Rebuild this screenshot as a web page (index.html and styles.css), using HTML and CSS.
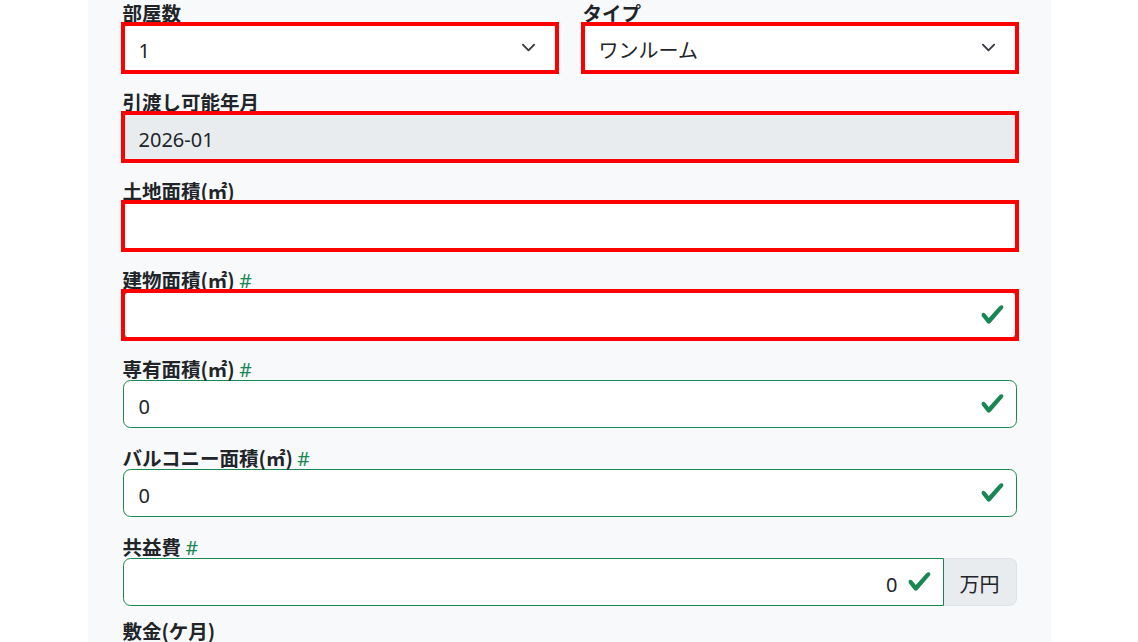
FILE: index.html
```html
<!DOCTYPE html>
<html lang="ja">
<head>
<meta charset="utf-8">
<title>物件情報</title>
<link rel="stylesheet" href="styles.css">
</head>
<body>
<div class="panel">
  <div class="row2">
    <div class="field">
      <label class="label">部屋数</label>
      <div class="flag">
        <div class="control">
          <select class="select"><option>1</option></select>
          <svg class="chev" viewBox="0 0 16 16" width="15" height="15"><path d="m2 5 6 6 6-6" fill="none" stroke="#343a40" stroke-width="2" stroke-linecap="round" stroke-linejoin="round"/></svg>
        </div>
      </div>
    </div>
    <div class="field">
      <label class="label">タイプ</label>
      <div class="flag">
        <div class="control">
          <select class="select"><option>ワンルーム</option></select>
          <svg class="chev" viewBox="0 0 16 16" width="15" height="15"><path d="m2 5 6 6 6-6" fill="none" stroke="#343a40" stroke-width="2" stroke-linecap="round" stroke-linejoin="round"/></svg>
        </div>
      </div>
    </div>
  </div>

  <div class="field">
    <label class="label">引渡し可能年月</label>
    <div class="flag">
      <div class="control readonly"><input class="input" value="2026-01" readonly></div>
    </div>
  </div>

  <div class="field">
    <label class="label">土地面積(㎡)</label>
    <div class="flag">
      <div class="control"><input class="input" value=""></div>
    </div>
  </div>

  <div class="field">
    <label class="label">建物面積(㎡) <span class="req">#</span></label>
    <div class="flag">
      <div class="control valid">
        <input class="input" value="">
        <svg class="check" viewBox="0 0 8 8" width="25" height="25"><path fill="#198754" d="M2.3 6.73.6 4.53c-.4-1.04.46-1.4 1.1-.8l1.1 1.4 3.4-3.8c.6-.63 1.6-.27 1.2.7l-4 4.6c-.43.5-.8.4-1.1.1z"/></svg>
      </div>
    </div>
  </div>

  <div class="field">
    <label class="label">専有面積(㎡) <span class="req">#</span></label>
    <div class="control valid">
      <input class="input" value="0">
      <svg class="check" viewBox="0 0 8 8" width="25" height="25"><path fill="#198754" d="M2.3 6.73.6 4.53c-.4-1.04.46-1.4 1.1-.8l1.1 1.4 3.4-3.8c.6-.63 1.6-.27 1.2.7l-4 4.6c-.43.5-.8.4-1.1.1z"/></svg>
    </div>
  </div>

  <div class="field">
    <label class="label">バルコニー面積(㎡) <span class="req">#</span></label>
    <div class="control valid">
      <input class="input" value="0">
      <svg class="check" viewBox="0 0 8 8" width="25" height="25"><path fill="#198754" d="M2.3 6.73.6 4.53c-.4-1.04.46-1.4 1.1-.8l1.1 1.4 3.4-3.8c.6-.63 1.6-.27 1.2.7l-4 4.6c-.43.5-.8.4-1.1.1z"/></svg>
    </div>
  </div>

  <div class="field field-tight">
    <label class="label">共益費 <span class="req">#</span></label>
    <div class="group">
      <div class="control valid grouped">
        <input class="input right" value="0">
        <svg class="check" viewBox="0 0 8 8" width="25" height="25"><path fill="#198754" d="M2.3 6.73.6 4.53c-.4-1.04.46-1.4 1.1-.8l1.1 1.4 3.4-3.8c.6-.63 1.6-.27 1.2.7l-4 4.6c-.43.5-.8.4-1.1.1z"/></svg>
      </div>
      <span class="addon">万円</span>
    </div>
  </div>

  <div class="field">
    <label class="label">敷金(ケ月)</label>
    <div class="control"><input class="input" value="1"></div>
  </div>
</div>
</body>
</html>
```

FILE: styles.css
```css
html, body {
  margin: 0;
  padding: 0;
  background: #ffffff;
  overflow: hidden;
}

body {
  font-family: "Noto Sans", "Noto Sans CJK JP", sans-serif;
  color: #212529;
  font-size: 20px;
}

.panel {
  width: 963px;
  margin: 0 auto;
  min-height: 642px;
  background: #f8f9fa;
  padding: 0 34px 0 35px;
  box-sizing: border-box;
}

.row2 {
  display: grid;
  grid-template-columns: 1fr 1fr;
  column-gap: 26px;
}

.field {
  margin-bottom: 17.5px;
}

.field-tight {
  margin-bottom: 12.5px;
}

.label {
  display: block;
  height: 24px;
  font-family: "Noto Sans CJK JP", sans-serif;
  font-weight: 700;
  font-size: 19.5px;
  line-height: 26px;
  color: #212529;
  white-space: nowrap;
}

.req {
  color: #198754;
  font-weight: 400;
  font-family: "Noto Sans", sans-serif;
  line-height: 1;
}

.flag {
  outline: 4px solid #ff0000;
  outline-offset: -2px;
}

.control {
  display: flex;
  align-items: center;
  height: 47.5px;
  box-sizing: border-box;
  border: 1px solid #dee2e6;
  border-radius: 7.5px;
  background: #ffffff;
}

.control.readonly {
  background: #e9ecef;
}

.control.valid {
  border-color: #198754;
}

.input,
.select {
  flex: 1;
  min-width: 0;
  height: 100%;
  box-sizing: border-box;
  border: 0;
  margin: 0;
  padding: 5px 15px 0 15px;
  background: transparent;
  font-family: "Noto Sans", "Noto Sans CJK JP", sans-serif;
  font-size: 20px;
  color: #212529;
  outline: none;
  appearance: none;
  -webkit-appearance: none;
}

.input.right {
  text-align: right;
  padding-right: 9px;
}

.chev {
  flex: none;
  margin-right: 20px;
}

.check {
  flex: none;
  margin-right: 11px;
}

.group {
  display: flex;
}

.group .grouped {
  flex: 1;
  border-radius: 7.5px 0 0 7.5px;
}

.addon {
  display: flex;
  align-items: center;
  height: 47.5px;
  box-sizing: border-box;
  padding: 3px 16px 0 16px;
  border: 1px solid #dee2e6;
  border-left: 0;
  border-radius: 0 7.5px 7.5px 0;
  background: #e9ecef;
  font-family: "Noto Sans CJK JP", sans-serif;
  font-size: 20px;
  color: #212529;
}
```
